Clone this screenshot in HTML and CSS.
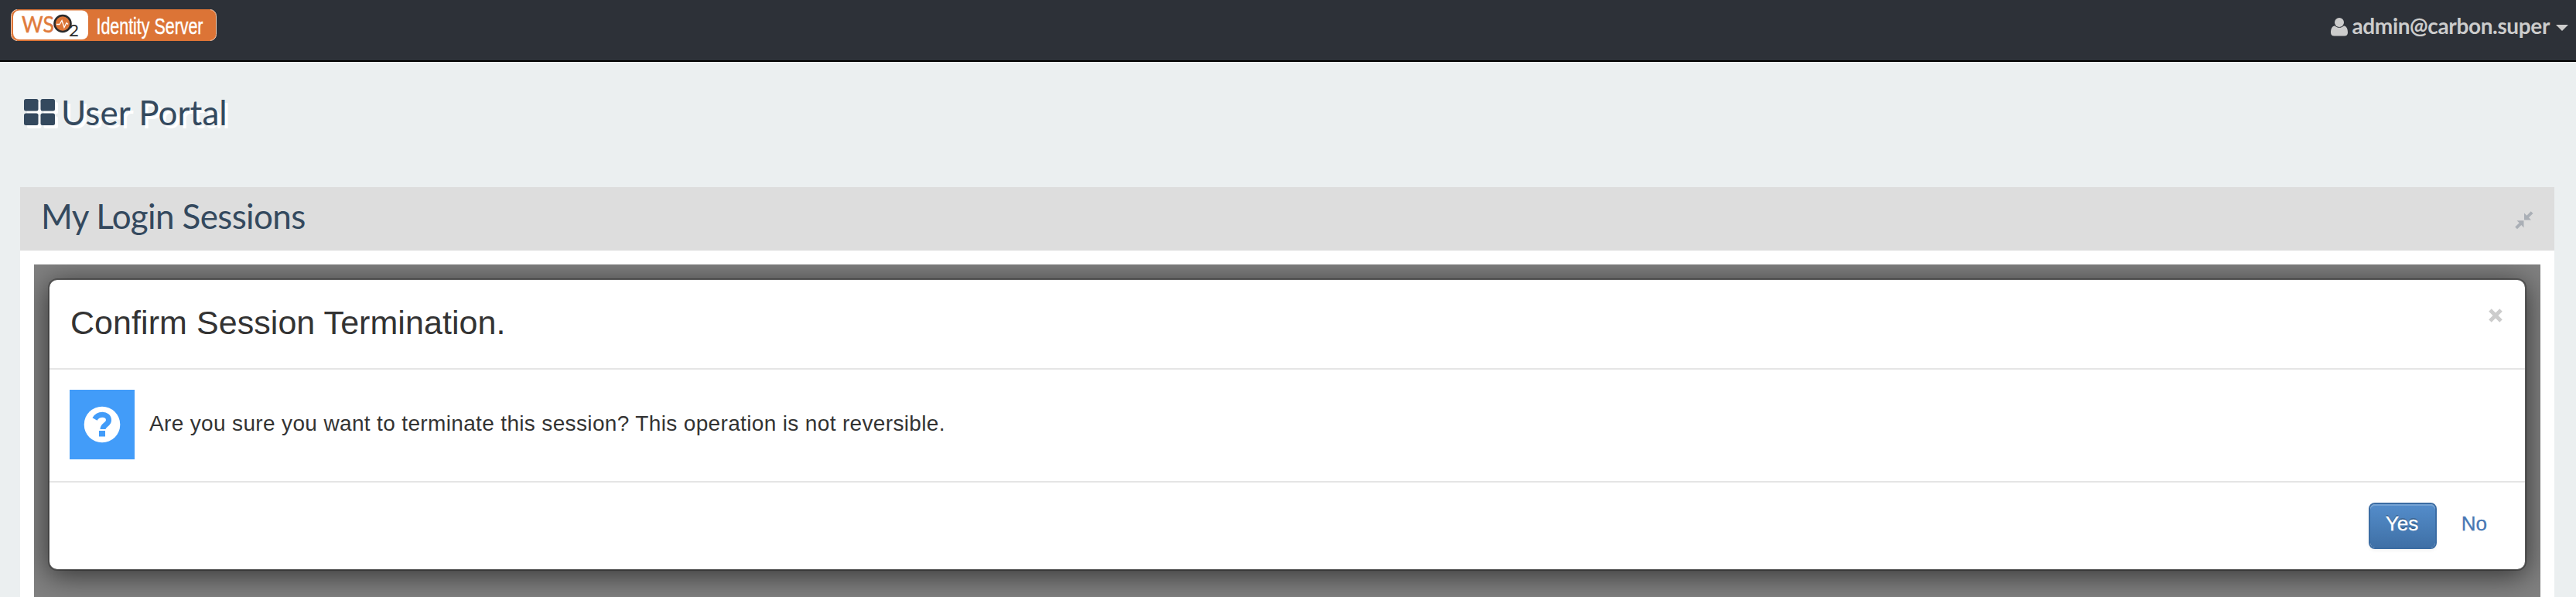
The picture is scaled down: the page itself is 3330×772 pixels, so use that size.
FILE: index.html
```html
<!DOCTYPE html>
<html lang="en">
<head>
<meta charset="utf-8">
<title>User Portal</title>
<link rel="stylesheet" href="styles.css">
</head>
<body>
<header class="topbar">
  <svg class="logo" viewBox="0 0 266 41" width="266" height="41">
    <rect x="0.5" y="0.5" width="265" height="40" rx="8" fill="#dc7436" stroke="#f3cdb5"/>
    <rect x="8" y="0" width="250" height="1" fill="#dc7436"/>
    <rect x="8" y="40" width="250" height="1" fill="#dc7436"/>
    <rect x="3" y="1.500" width="97" height="37.500" rx="8" fill="#fff"/>
    <text x="14" y="29.500" class="logo-ws" textLength="42" lengthAdjust="spacingAndGlyphs">WS</text>
    <circle cx="67" cy="18.500" r="10.500" fill="#dc7436" stroke="#2b2b2b" stroke-width="2.600"/>
    <path d="M59 19.500h4l3-5 3 9 3-6 2 2" fill="none" stroke="#fff" stroke-width="1.300"/>
    <text x="75" y="35" class="logo-two" textLength="13" lengthAdjust="spacingAndGlyphs">2</text>
    <text x="110.500" y="31.500" class="logo-name" textLength="138" lengthAdjust="spacingAndGlyphs">Identity Server</text>
  </svg>
  <div class="account">
    <svg class="user-icon" viewBox="0 0 22 24" width="22" height="24">
      <circle cx="11" cy="6" r="6"/>
      <path d="M5 10.200C1.500 11 0 14.500 0 19c0 3 1.700 4.500 4.500 4.500h13c2.800 0 4.500-1.500 4.500-4.500 0-4.500-1.500-8-5-8.800-1.500 1.500-3.500 2.600-6 2.600s-4.500-1.100-6-2.600z"/>
    </svg>
    <span class="account-name">admin@carbon.super</span>
    <span class="caret"></span>
  </div>
</header>
<h1 class="page-title">
  <svg class="grid-icon" viewBox="0 0 40 34" width="40" height="34">
    <rect width="18.500" height="15.500" rx="2.500"/><rect x="21.500" width="18.500" height="15.500" rx="2.500"/>
    <rect y="18.500" width="18.500" height="15.500" rx="2.500"/><rect x="21.500" y="18.500" width="18.500" height="15.500" rx="2.500"/>
  </svg>
  <span class="page-name">User Portal</span>
</h1>
<main class="panel">
  <div class="panel-head">
    <h2 class="panel-title">My Login Sessions</h2>
    <svg class="compress" viewBox="0 0 24 24" width="24" height="24">
      <path d="M12 2.500v9h9l-3-3.200 5.500-5.300-2.800-2.800-5.300 5.500zM11.500 21.500v-9.300H2.500l3.200 3L.2 20.500l2.800 2.800 5.300-5.200z"/>
    </svg>
  </div>
  <div class="backdrop">
    <section class="modal">
      <div class="modal-head">
        <h3 class="modal-title">Confirm Session Termination.</h3>
        <svg class="close" viewBox="0 0 18 18" width="18" height="18"><path d="M2 2l14 14M16 2L2 16"/></svg>
      </div>
      <div class="modal-body">
        <span class="question">
          <svg viewBox="0 0 48 48" width="48" height="48">
            <circle cx="24" cy="24" r="23.300" fill="#fff"/>
            <path d="M14.500 17C17 12.500 20 11.200 24.500 11.200c4.500 0 8 2.800 8 7 0 6-7.500 6-7.500 11.800" fill="none" class="q-hook"/>
            <rect x="20" y="32" width="8" height="7.500" class="q-dot"/>
          </svg>
        </span>
        <span class="message">Are you sure you want to terminate this session? This operation is not reversible.</span>
      </div>
      <div class="modal-foot">
        <span class="btn btn-primary">Yes</span>
        <span class="btn btn-link">No</span>
      </div>
    </section>
  </div>
</main>
</body>
</html>
```
FILE: styles.css
```css
* { box-sizing: border-box; }
body {
  margin: 0;
  height: 772px;
  overflow: hidden;
  background: #ebeff0;
  color: #333;
  font: 28px/40px "Liberation Sans", Arial, sans-serif;
}
h1, h2, h3 { margin: 0; font-weight: 400; }
svg { display: block; flex: none; }

.topbar {
  display: flex;
  justify-content: space-between;
  align-items: flex-start;
  height: 80px;
  padding: 12px 10px 0 14px;
  background: #2d3138;
  border-bottom: 2px solid #000;
}
.logo { overflow: visible; }
.logo-ws { font: 400 29px Lato, sans-serif; fill: #e07b3c; stroke: #e07b3c; stroke-width: .5px; }
.logo-two { font: 400 22px Lato, sans-serif; fill: #2b2b2b; }
.logo-name { font: 400 29px "Liberation Sans Narrow", "Liberation Sans", sans-serif; fill: #fff; stroke: #fff; stroke-width: .4px; }

.account { display: flex; color: #ccc; }
.user-icon { margin-top: 11px; fill: #ccc; }
.account-name { margin: 1px 0 0 5px; font: 700 28px/40px Lato, sans-serif; letter-spacing: -.36px; }
.caret {
  margin: 20px 0 0 8px;
  border: 8px solid transparent;
  border-top-color: #ccc;
  border-bottom: 0;
  height: 8px;
}

.page-title { display: flex; height: 162px; padding: 48px 0 0 31px; color: #34495e; }
.grid-icon { fill: #34495e; filter: drop-shadow(4px 4px 0 #fff); overflow: visible; }
.page-name { margin: -9px 0 0 8px; font: 400 44px/52px Lato, sans-serif; letter-spacing: .05px; text-shadow: 4px 4px 0 #fff; }

.panel { margin: 0 28px 0 26px; height: 530px; display: flex; flex-direction: column; background: #fff; }
.panel-head { display: flex; justify-content: space-between; height: 82px; padding: 12px 27px 0 27px; background: #ddd; }
.panel-title { margin-top: -1px; font: 400 44px/52px Lato, sans-serif; letter-spacing: -.64px; color: #34495e; }
.compress { margin-top: 19px; fill: #aaafb6; }

.backdrop { flex: 1; margin: 18px 18px 0; padding: 18px; background: #808080; overflow: hidden; }
.modal {
  border: 2px solid rgba(0, 0, 0, .3);
  border-radius: 12px;
  background: #fff;
  background-clip: padding-box;
  box-shadow: 0 6px 36px rgba(0, 0, 0, .6);
}
.modal-head { display: flex; justify-content: space-between; height: 116px; padding: 30px 29px 0 27px; border-bottom: 2px solid #e5e5e5; }
.modal-title { font-size: 43px; line-height: 50px; letter-spacing: .06px; }
.close { margin-top: 7px; fill: none; stroke: #ccc; stroke-width: 5px; }
.modal-body { display: flex; align-items: center; height: 146px; padding: 0 26px 2px; border-bottom: 2px solid #e5e5e5; }
.question { display: flex; align-items: center; justify-content: center; width: 84px; height: 90px; background: #429cf9; }
.q-hook { stroke: #429cf9; stroke-width: 7px; }
.q-dot { fill: #429cf9; }
.message { margin-left: 19px; padding-bottom: 2px; letter-spacing: .35px; }
.modal-foot { display: flex; justify-content: flex-end; gap: 8px; height: 112px; padding: 26px 25px 0; }
.btn { height: 60px; padding: 5px 22px 0; border: 2px solid transparent; border-radius: 8px; font-size: 26px; -webkit-text-stroke: .3px currentColor; }
.btn-primary {
  color: #fff;
  width: 88px;
  padding-left: 20px;
  border-color: #3b6ca3;
  background: linear-gradient(#548dcb, #3f70a6) padding-box;
  text-shadow: 0 -2px 0 rgba(0, 0, 0, .25);
  box-shadow: inset 0 2px 0 rgba(255, 255, 255, .2), 0 2px 4px rgba(0, 0, 0, .05);
}
.btn-link { color: #4878b4; }
```
